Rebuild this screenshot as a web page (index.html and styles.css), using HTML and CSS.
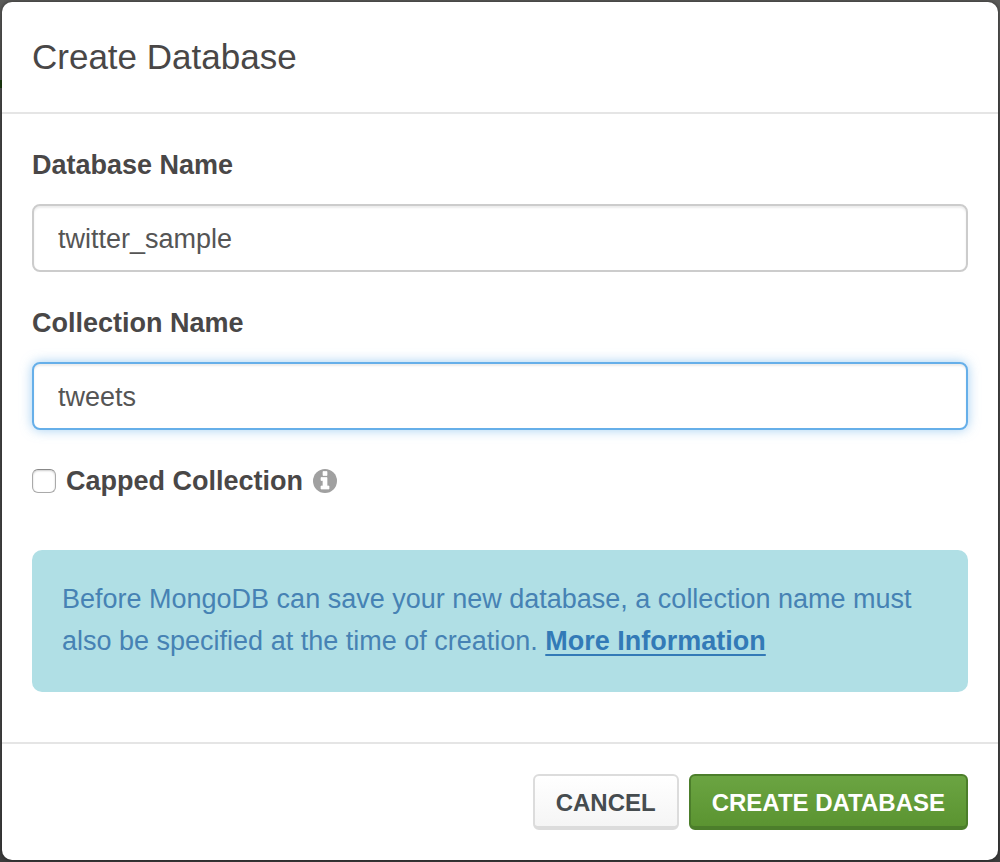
FILE: index.html
```html
<!DOCTYPE html>
<html lang="en">
<head>
<meta charset="utf-8">
<meta name="viewport" content="width=device-width, initial-scale=1">
<title>Create Database</title>
<link rel="stylesheet" href="styles.css">
</head>
<body class="backdrop">
<form class="modal" role="dialog" aria-labelledby="modal-title">
  <header class="modal-header">
    <h1 class="modal-title" id="modal-title">Create Database</h1>
  </header>
  <div class="modal-body">
    <div class="field">
      <label class="label" for="database-name">Database Name</label>
      <input class="text-input" id="database-name" type="text" value="twitter_sample">
    </div>
    <div class="field">
      <label class="label" for="collection-name">Collection Name</label>
      <input class="text-input text-input-active" id="collection-name" type="text" value="tweets">
    </div>
    <div class="check-row">
      <input class="checkbox" id="capped" type="checkbox">
      <label class="label" for="capped">Capped Collection</label>
      <svg class="info-icon" viewBox="0 0 24 24" aria-hidden="true">
        <circle cx="12" cy="12" r="12" fill="#a0a0a0"/>
        <path d="M10 2.5h4v4h-4zM8 8.5h6v8.500h2v3H8v-3h2v-5.500H8z" fill="#fff" stroke="#fff" stroke-width="0.700" stroke-linejoin="round"/>
      </svg>
    </div>
    <p class="notice">Before MongoDB can save your new database, a collection name must also be specified at the time of creation. <a class="notice-link" href="#">More Information</a></p>
  </div>
  <footer class="modal-footer">
    <button class="button button-default" type="button">CANCEL</button>
    <button class="button button-primary" type="submit">CREATE DATABASE</button>
  </footer>
</form>
</body>
</html>
```
FILE: styles.css
```css
* {
  box-sizing: border-box;
}

.backdrop {
  margin: 0;
  padding: 2px;
  min-height: 100vh;
  background:
    linear-gradient(#1c3d10, #1c3d10) 0 80px / 2px 8px no-repeat,
    linear-gradient(#5c5c5a, #484848 15%, #464646 90%, #3c3c3c);
  font-family: "Liberation Sans", Arial, sans-serif;
  color: #494747;
}

.modal {
  background: #fff;
  border-radius: 10px;
  box-shadow: 0 0 4px rgba(0, 0, 0, 0.5);
}

.modal-header {
  padding: 30px;
  border-bottom: 2px solid #e5e5e5;
}

.modal-title {
  margin: 0;
  font-size: 35px;
  font-weight: 400;
  line-height: 50px;
}

.modal-body {
  padding: 30px 30px 50px;
}

.field {
  display: flex;
  flex-direction: column;
  gap: 18px;
  margin-bottom: 30px;
}

.label {
  font-size: 27px;
  font-weight: 700;
  line-height: 42px;
}

.text-input {
  width: 100%;
  height: 68px;
  padding: 2px 24px 0;
  border: 2px solid #ccc;
  border-radius: 8px;
  outline: none;
  background: #fff;
  box-shadow: inset 0 2px 2px rgba(0, 0, 0, 0.075);
  color: #555;
  font-family: inherit;
  font-size: 27px;
}

.text-input-active {
  border-color: #66afe9;
  box-shadow: inset 0 2px 2px rgba(0, 0, 0, 0.075), 0 0 12px rgba(102, 175, 233, 0.6);
}

.check-row {
  display: flex;
  align-items: center;
  gap: 10px;
}

.checkbox {
  appearance: none;
  width: 24px;
  height: 24px;
  margin: 0;
  border: 1px solid #aaa;
  border-top-color: #888;
  border-radius: 6px;
  background: #fff;
  box-shadow: inset 0 1px 2px rgba(0, 0, 0, 0.2);
}

.checkbox:checked {
  background: #66afe9;
}

.info-icon {
  width: 24px;
  height: 24px;
}

.notice {
  margin: 48px 0 0;
  padding: 28px 30px 30px;
  border-radius: 10px;
  background: #b0dfe5;
  color: #4682b4;
  font-size: 27px;
  line-height: 42px;
}

.notice-link {
  color: #337ab7;
  font-weight: 700;
  text-decoration-thickness: 2px;
  text-underline-offset: 4px;
}

.modal-footer {
  display: flex;
  justify-content: flex-end;
  gap: 10px;
  padding: 30px;
  border-top: 2px solid #e5e5e5;
}

.button {
  height: 56px;
  padding: 4px 21px 0;
  border: 2px solid;
  border-bottom-width: 4px;
  border-radius: 6px;
  font-family: inherit;
  font-size: 24px;
  font-weight: 700;
}

.button-default {
  border-color: #dcdcdc;
  background: linear-gradient(#fff, #f5f5f5);
  color: #464c4f;
}

.button-primary {
  border-color: #4c7e2b;
  background: linear-gradient(#6ba442, #5b9431);
  color: #fff;
}
```
